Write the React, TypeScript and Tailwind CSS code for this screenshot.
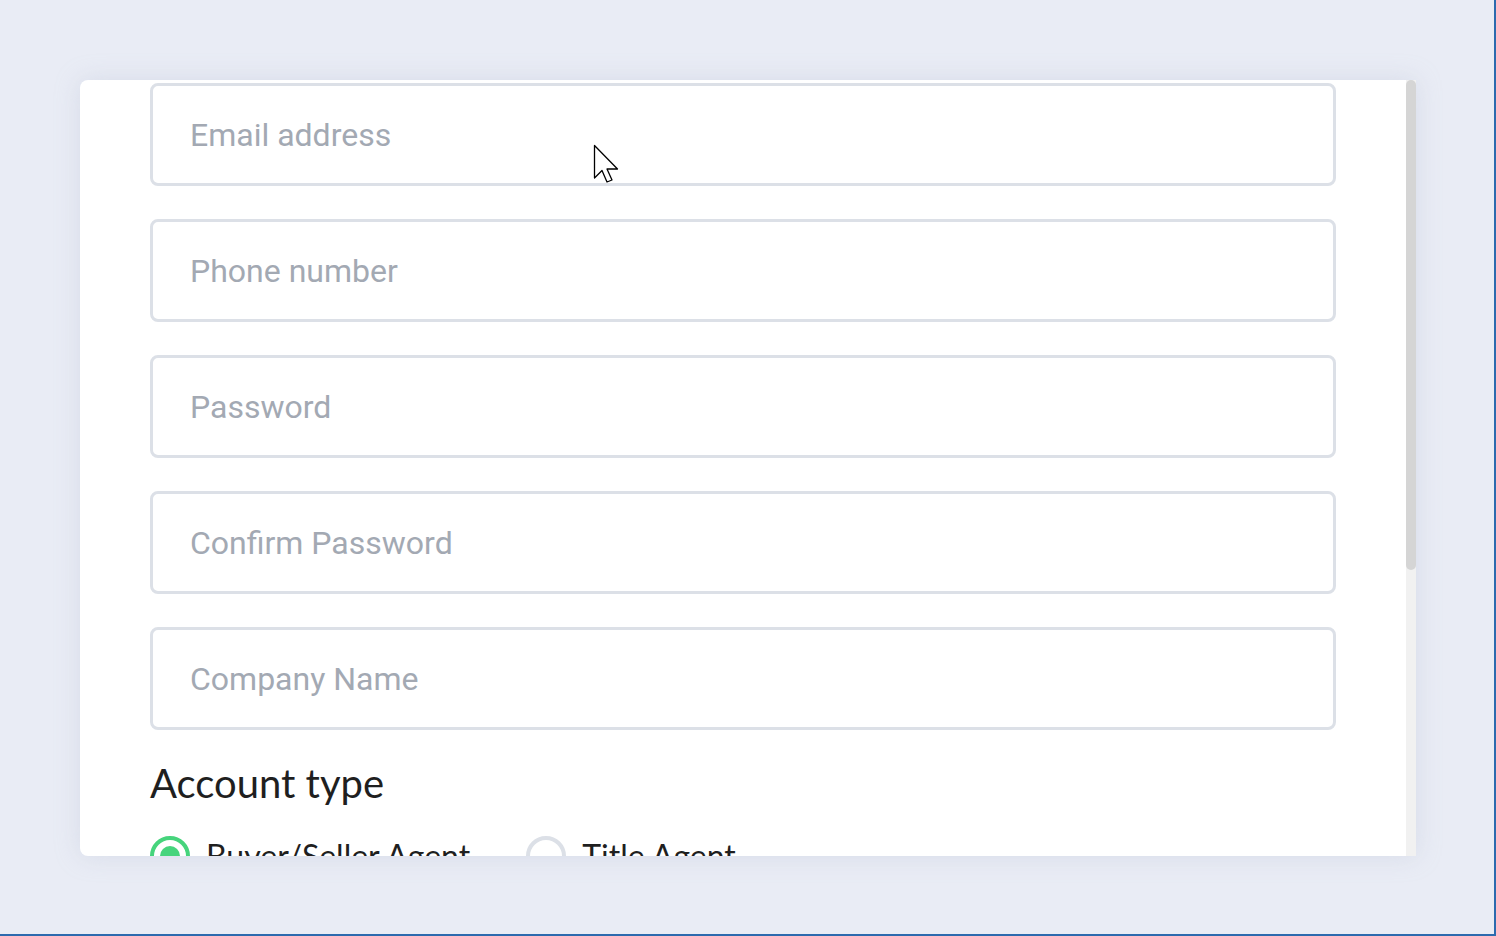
import React from 'react';

const fields = ['Email address', 'Phone number', 'Password', 'Confirm Password', 'Company Name'];

export default function App() {
  return (
    <div className="relative h-[936px] w-full overflow-hidden border-r-2 border-b-2 border-[#2c6aae] bg-[#e9ecf5] pl-20 pt-20">
      <div className="flex h-[776px] w-[1336px] overflow-hidden rounded-l-lg bg-white shadow-[0_0_24px_rgba(180,190,210,0.35)]">
        {/* Scrolling form body */}
        <div className="flex-1 overflow-hidden px-[70px] pt-[3px]">
          <div className="flex flex-col gap-[33px]">
            {fields.map((f) => (
              <input
                key={f}
                type="text"
                placeholder={f}
                className="h-[103px] w-full rounded-lg border-[3px] border-[#dce0e7] bg-white px-[37px] font-['Roboto',sans-serif] text-[32px] text-gray-700 outline-none placeholder:text-[#a3a9b3]"
              />
            ))}
          </div>

          <h2 className="mt-[26px] font-['Lato',sans-serif] text-[40px] leading-[54px] font-normal text-[#1f1f1f]">
            Account type
          </h2>

          <div className="mt-[22px] flex items-center gap-[56px] font-['Lato',sans-serif] text-[32px] text-[#1f1f1f]">
            <label className="flex items-center gap-4">
              <span className="flex h-10 w-10 items-center justify-center rounded-full border-4 border-[#46d47c]">
                <span className="h-5 w-5 rounded-full bg-[#46d47c]" />
              </span>
              Buyer/Seller Agent
            </label>
            <label className="flex items-center gap-4">
              <span className="h-10 w-10 rounded-full border-4 border-[#dce0e7]" />
              Title Agent
            </label>
          </div>
        </div>

        {/* Scrollbar */}
        <div className="w-[10px] bg-[#f1f1f1]">
          <div className="h-[490px] rounded-full bg-[#d5d5d5]" />
        </div>
      </div>

      {/* Mouse pointer */}
      <svg className="absolute left-[593px] top-[144px]" width="28" height="42" viewBox="0 0 28 42">
        <path
          d="M1.5 1.5 L1.5 34 L9 26.5 L14 38 L19 36 L14 25 L24.5 25 Z"
          fill="white"
          stroke="black"
          strokeWidth="1.3"
          strokeLinejoin="round"
        />
      </svg>
    </div>
  );
}
